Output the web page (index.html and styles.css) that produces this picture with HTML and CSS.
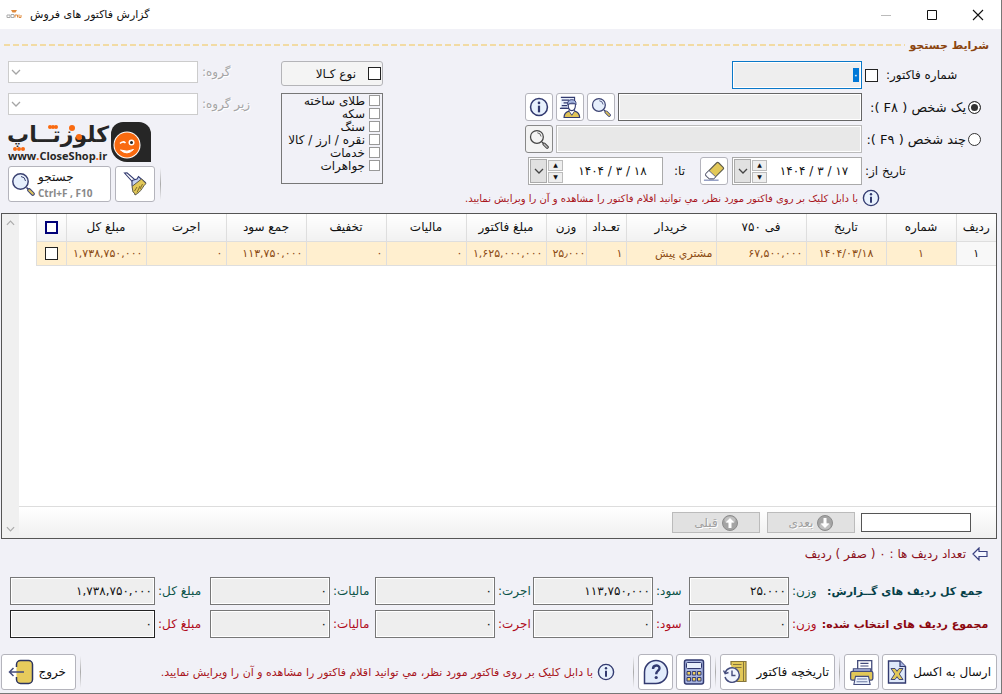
FILE: index.html
```html
<!DOCTYPE html>
<html lang="fa" dir="rtl">
<head>
    <meta charset="UTF-8">
    <meta name="viewport" content="width=device-width, initial-scale=1.0">
    <title>گزارش فاکتور های فروش</title>
    <link rel="stylesheet" href="styles.css">
</head>
<body>
    <svg class="defs" aria-hidden="true">
      <symbol id="i-search" viewBox="0 0 24 24">
        <path d="M15.5 15.5l2 2" stroke="#3b4272" stroke-width="1.6"/>
        <path d="M18.2 18.2l3.6 3.6" stroke="#3b4272" stroke-width="4" stroke-linecap="round"/>
        <path d="M18.2 18.2l3.6 3.6" stroke="#dcc25c" stroke-width="2" stroke-linecap="round"/>
        <circle cx="9.5" cy="9.5" r="7.7" fill="#e6effc" stroke="#3b4272" stroke-width="1.5"/>
        <path d="M10 4.5a5 5 0 0 1 4.5 4.5" fill="none" stroke="#3b4272"/>
      </symbol>
      <symbol id="i-search-grey" viewBox="0 0 24 24">
        <path d="M15.5 15.5l2 2" stroke="#444" stroke-width="1.6"/>
        <path d="M18.2 18.2l3.6 3.6" stroke="#444" stroke-width="4" stroke-linecap="round"/>
        <path d="M18.2 18.2l3.6 3.6" stroke="#bbb" stroke-width="1.6" stroke-linecap="round"/>
        <circle cx="9.5" cy="9.5" r="7.7" fill="#f3f3f3" stroke="#444" stroke-width="1.5"/>
        <path d="M10 4.5a5 5 0 0 1 4.5 4.5" fill="none" stroke="#444"/>
      </symbol>
      <symbol id="i-info" viewBox="0 0 18 18">
        <circle cx="9" cy="9" r="7.6" fill="#e8f1fd" stroke="#323a70" stroke-width="1.4"/>
        <circle cx="9" cy="5.3" r="1.2" fill="#323a70"/>
        <path d="M9 7.8v6" stroke="#323a70" stroke-width="2"/>
      </symbol>
      <symbol id="i-person" viewBox="0 0 24 24">
        <path d="M2 1.5h15v12H2" fill="#e8effb" stroke="#323a70" stroke-width="1.2"/>
        <path d="M3 4.5h8M5 7.5h5M3 10.5h6M1 13.5h8" stroke="#323a70" stroke-width="1.2"/>
        <path d="M5.5 23.5c0-4.5 2-6 5.5-7h6c3.5 1 5.5 2.5 5.5 7z" fill="#e0c458" stroke="#323a70" stroke-width="1.3"/>
        <path d="M11 16.5l3 4.5 3-4.5v-2h-6z" fill="#fff" stroke="#323a70"/>
        <path d="M10 8.5c0 5 1.5 7.5 4 7.5s4-2.5 4-7.5z" fill="#fff" stroke="#323a70" stroke-width="1.2"/>
        <path d="M9.5 9.5c-.5-4 1.5-5.5 4.5-5.5s5 1.5 4.5 5.5c-1.500-2-5-2.500-9 0z" fill="#a8b8e2" stroke="#323a70"/>
      </symbol>
      <symbol id="i-eraser" viewBox="0 0 24 24">
        <path d="M1 22h16" stroke="#6e7cb0" stroke-width="1.2"/>
        <path d="M3.5 14.5L15 3q1-1 2 0l5 5q1 1 0 2L11.5 20.5H7l-3.500-3q-1.500-1.500 0-3z" fill="#e2c858" stroke="#5c5a4c" stroke-width="1.2"/>
        <path d="M3.5 14.5l3-3 7.5 7-2.500 2H7l-3.500-3q-1.500-1.500 0-3z" fill="#fff" stroke="#555b80"/>
      </symbol>
      <symbol id="i-broom" viewBox="0 0 24 24">
        <path d="M1.5 1l2.500-.2 8 7-2.300 2.200z" fill="#fff" stroke="#323a70" stroke-width="1.1"/>
        <path d="M9 13.500v-4q0-1.500 1.500-1.500l3.500-1 1.500-2.500 7 6-2 2.500-10 4z" fill="#c3d0f0" stroke="#323a70" stroke-width="1.1"/>
        <path d="M9 14.500l9.500-7.500 4.500 4.500c-3 2-4 8-11 11.500q0-2.500-2-3z" fill="#e2c858" stroke="#5c5a4c"/>
        <path d="M11.500 19l2.500-4M14 20.500l3-6.500M17 17l2.500-5" stroke="#806c2c"/>
      </symbol>
      <symbol id="i-excel" viewBox="0 0 24 24">
        <path d="M3.500 1h11.500l5.500 5.500v16.500H3.500z" fill="#dfe9fa" stroke="#323a70" stroke-width="1.4"/>
        <path d="M15 1v5.500h5.500" fill="#a9b6e2" stroke="#323a70" stroke-width="1.2"/>
        <path d="M6 8.500h4l2 2.800 2-2.800h4l-3.700 5.500 3.700 5.500h-4l-2-2.800-2 2.800H6l3.700-5.500z" fill="#e2c858" stroke="#323a70" stroke-width=".9"/>
      </symbol>
      <symbol id="i-print" viewBox="0 0 24 24">
        <path d="M8 11V1.500h13V11" fill="#fff" stroke="#444c7c" stroke-width="1.2"/>
        <path d="M10.500 4h7.500M10.500 6.500h7.500" stroke="#444c7c"/>
        <path d="M4 9h16v3.500H4z" fill="#aeb9e0" stroke="#444c7c"/>
        <rect x="1.500" y="11.500" width="20.500" height="8" rx="1.500" fill="#e2c858" stroke="#444c7c" stroke-width="1.2"/>
        <path d="M6 16h12l1.500 7.500h-15z" fill="#e8effb" stroke="#444c7c"/>
        <path d="M7.500 18.500h9M7 21h10" stroke="#6c7ba4"/>
      </symbol>
      <symbol id="i-history" viewBox="0 0 24 24">
        <path d="M8 5V1.500h15V21.500H11" fill="#e2c858" stroke="#85753c" stroke-width="1.2"/>
        <path d="M10 4.500h8.500M12 7.500h6.500M20.500 2v19" stroke="#85753c"/>
        <circle cx="9" cy="15" r="7.8" fill="#f0f4fd"/>
        <path d="M2.200 12.500a7.300 7.300 0 1 1-.2 4.500M.5 10.500l1.700 3.200 3.300-1.200" fill="none" stroke="#444c7c" stroke-width="1.4"/>
        <path d="M9 10.500V15.500h3.500" fill="none" stroke="#444c7c" stroke-width="1.4"/>
      </symbol>
      <symbol id="i-calc" viewBox="0 0 22 26">
        <rect x="1.500" y="1" width="19" height="24" rx="2" fill="#a9b6e0" stroke="#323a70" stroke-width="1.5"/>
        <rect x="3.500" y="3.500" width="15" height="6" rx="1" fill="#e8effb" stroke="#323a70"/>
        <path d="M4 12.500h3.500v3.500H4zM9.300 12.500h3.500v3.500H9.300zM4 18.500h3.500v3.500H4zM9.300 18.500h3.500v3.500H9.300zM14.500 12.500h3.500v3.500h-3.500zM14.500 18.500h3.500v3.500h-3.500z" fill="#f0d060" stroke="#323a70"/>
      </symbol>
      <symbol id="i-help" viewBox="0 0 26 26">
        <path d="M1.500 24.500V13a11.500 11.500 0 1 1 11.500 11.500z" fill="#e2ecfc" stroke="#323a70" stroke-width="1.5"/>
        <path d="M10 10c0-4.500 6.500-4.500 6.500-.8 0 2.500-3.300 2.500-3.300 6" fill="none" stroke="#323a70" stroke-width="2.4"/>
        <circle cx="13.200" cy="18.500" r="1.6" fill="#323a70"/>
      </symbol>
      <symbol id="i-exit" viewBox="0 0 26 26">
        <rect x="8.500" y="1.500" width="16" height="23" rx="4" fill="#e6cb5c"/>
        <path d="M8.500 8V5.500a4 4 0 0 1 4-4h8a4 4 0 0 1 4 4v15a4 4 0 0 1-4 4h-8a4 4 0 0 1-4-4V18" fill="none" stroke="#2c3460" stroke-width="1.5"/>
        <path d="M16 13H2M5.500 9L1.500 13l4 4" fill="none" stroke="#444c7c" stroke-width="1.5"/>
      </symbol>
      <symbol id="i-chevron" viewBox="0 0 10 6">
        <path d="M1 1l4 4 4-4" fill="none" stroke="currentColor" stroke-width="1.3"/>
      </symbol>
      <symbol id="i-arrow-ball" viewBox="0 0 16 16">
        <circle cx="8" cy="8" r="7.5" fill="#a4a4a4" stroke="#8c8c8c"/>
        <ellipse cx="8" cy="5" rx="5.5" ry="3.5" fill="#c0c0c0"/>
        <path d="M8 3l4.500 4.500h-3V13h-3V7.500h-3z" fill="#fff"/>
      </symbol>
    </svg>

    <header class="titlebar" dir="ltr">
      <svg class="app-icon" viewBox="0 0 16 12" aria-hidden="true">
        <path d="M5 1h6l-1.500 2.500h-3z" fill="#e08a3c"/>
        <path d="M1 6h3v2.500H1zM5 5.500h3v3H5z" fill="none" stroke="#aaa"/>
        <path d="M9 8.500V6h2.500v2.500M13 5.500v3h2V6" fill="none" stroke="#e08a3c"/>
      </svg>
      <h1 dir="rtl">گزارش فاکتور های فروش</h1>
      <div class="win-buttons">
        <button type="button" aria-label="Minimize" disabled><svg viewBox="0 0 12 12"><path d="M1 6.500h10" stroke="#bbb"/></svg></button>
        <button type="button" aria-label="Maximize"><svg viewBox="0 0 12 12"><path d="M1.500 1.500h9v9h-9z" fill="none" stroke="#111"/></svg></button>
        <button type="button" aria-label="Close"><svg viewBox="0 0 12 12"><path d="M1 1l10 10M11 1L1 11" stroke="#111" stroke-width="1.1"/></svg></button>
      </div>
    </header>

    <main>
      <div class="section-title">
        <h2>شرایط جستجو</h2>
        <svg class="dashes" height="2" aria-hidden="true"><line x1="0" y1="1" x2="100%" y2="1"/></svg>
      </div>

      <form class="search" onsubmit="return false">
        <div class="conditions">
          <div class="field">
            <div class="caption number-caption">
              <label for="number-on">شماره فاکتور:</label>
              <input type="checkbox" class="check" id="number-on">
            </div>
            <input type="text" class="box number" id="number" aria-label="شماره فاکتور" value="۰">
          </div>
          <div class="field">
            <label class="caption person"><input type="radio" name="person" checked><span>یک شخص ( F۸ ):</span></label>
            <input type="text" class="box" aria-label="یک شخص">
            <button type="button" class="tool" aria-label="جستجوی شخص"><svg><use href="#i-search"/></svg></button>
            <button type="button" class="tool" aria-label="مشخصات شخص"><svg class="big"><use href="#i-person"/></svg></button>
            <button type="button" class="tool" aria-label="اطلاعات"><svg><use href="#i-info"/></svg></button>
          </div>
          <div class="field">
            <label class="caption person"><input type="radio" name="person"><span>چند شخص ( F۹ ):</span></label>
            <input type="text" class="box dim" aria-label="چند شخص">
            <button type="button" class="tool pressed" aria-label="جستجوی چند شخص"><svg><use href="#i-search-grey"/></svg></button>
          </div>
          <div class="field dates">
            <label class="caption date-caption" for="date-from">تاریخ از:</label>
            <div class="date" dir="ltr">
              <button type="button" class="drop" aria-label="تقویم"><svg><use href="#i-chevron"/></svg></button>
              <div class="spin"><button type="button" aria-label="بیشتر">▲</button><button type="button" aria-label="کمتر">▼</button></div>
              <input type="text" id="date-from" value="۱۴۰۴ / ۳ / ۱۷">
            </div>
            <button type="button" class="tool" aria-label="پاک کردن تاریخ"><svg class="big"><use href="#i-eraser"/></svg></button>
            <label class="date-to" for="date-to">تا:</label>
            <div class="date wide" dir="ltr">
              <button type="button" class="drop" aria-label="تقویم"><svg><use href="#i-chevron"/></svg></button>
              <div class="spin"><button type="button" aria-label="بیشتر">▲</button><button type="button" aria-label="کمتر">▼</button></div>
              <input type="text" id="date-to" value="۱۴۰۴ / ۳ / ۱۸">
            </div>
          </div>
          <p class="hint search-hint"><svg><use href="#i-info"/></svg><span>با دابل کلیک بر روی فاکتور مورد نظر، مي توانید اقلام فاکتور را مشاهده و آن را ویرایش نمایید.</span></p>
        </div>

        <div class="kinds">
          <label class="kind-all"><input type="checkbox" class="check"><span>نوع کـالا</span></label>
          <div class="kind-list">
            <label><input type="checkbox"><span>طلای ساخته</span></label>
            <label><input type="checkbox"><span>سکه</span></label>
            <label><input type="checkbox"><span>سنگ</span></label>
            <label><input type="checkbox"><span>نقره / ارز / کالا</span></label>
            <label><input type="checkbox"><span>خدمات</span></label>
            <label><input type="checkbox"><span>جواهرات</span></label>
          </div>
        </div>

        <div class="groups">
          <div class="group">
            <label for="group">گروه:</label>
            <div class="select"><select id="group" disabled></select><svg><use href="#i-chevron"/></svg></div>
          </div>
          <div class="group">
            <label for="subgroup">زیر گروه:</label>
            <div class="select"><select id="subgroup" disabled></select><svg><use href="#i-chevron"/></svg></div>
          </div>
          <div class="logo">
            <svg class="face" viewBox="0 0 40 40" aria-hidden="true">
              <path d="M0 12A12 12 0 0 1 12 0H28A12 12 0 0 1 40 12V40H16A16 16 0 0 1 0 24z" fill="#262626"/>
              <circle cx="16" cy="23" r="13.5" fill="#fff"/>
              <circle cx="16" cy="23" r="12.5" fill="#f96a10"/>
              <path d="M9 21.500q3-3 5.500-.5" fill="none" stroke="#fff" stroke-width="1.5"/>
              <path d="M9.500 28q6.500 6 13-.5-6.500 3-13 .5z" fill="#fff" stroke="#fff"/>
              <circle cx="20.500" cy="20.500" r="3" fill="#fff"/>
              <circle cx="20.500" cy="20.500" r="1.500" fill="#222"/>
            </svg>
            <div class="brand">
              <strong>کلوزتــاپ</strong>
              <span dir="ltr">www<b>.</b>CloseShop<b>.</b>ir</span>
              <svg class="dots" viewBox="0 0 101 42" aria-hidden="true">
                <circle cx="64" cy="7" r="3"/>
                <circle cx="42" cy="6" r="2"/><circle cx="45" cy="6" r="2"/><circle cx="48" cy="6" r="2"/>
                <circle cx="71" cy="16" r="3"/>
                <circle cx="7" cy="28" r="2"/><circle cx="11" cy="28" r="2"/><circle cx="15" cy="28" r="2"/>
              </svg>
            </div>
          </div>
          <div class="actions">
            <i class="sep"></i>
            <button type="button" class="action broom" aria-label="پاک کردن"><svg><use href="#i-broom"/></svg></button>
            <button type="submit" class="action find">
              <span class="find-text">جستجو<small dir="ltr">Ctrl+F , F10</small></span>
              <svg><use href="#i-search"/></svg>
            </button>
          </div>
        </div>
      </form>

      <section class="report">
        <div class="report-body">
          <div class="sheet">
            <table>
              <colgroup>
                <col class="c40"><col class="c70"><col class="c80"><col class="c90"><col class="c90"><col class="c40"><col class="c40">
                <col class="c80"><col class="c80"><col class="c80"><col class="c80"><col class="c80"><col class="c80"><col class="c30">
              </colgroup>
              <thead>
                <tr>
                  <th>ردیف</th><th>شماره</th><th>تاریخ</th><th>فی ۷۵۰</th><th>خریدار</th><th>تعـداد</th><th>وزن</th>
                  <th>مبلغ فاکتور</th><th>مالیات</th><th>تخفیف</th><th>جمع سود</th><th>اجرت</th><th>مبلغ کل</th>
                  <th><input type="checkbox" class="check navy" aria-label="انتخاب همه"></th>
                </tr>
              </thead>
              <tbody>
                <tr>
                  <td class="row-no">۱</td><td class="mid">۱</td><td class="mid">۱۴۰۴/۰۳/۱۸</td><td class="num">۶۷,۵۰۰,۰۰۰</td><td>مشتري پیش</td><td class="num">۱</td><td class="num weight">۲۵٫۰۰۰</td>
                  <td class="num">۱,۶۲۵,۰۰۰,۰۰۰</td><td class="num">۰</td><td class="num">۰</td><td class="num">۱۱۳,۷۵۰,۰۰۰</td><td class="num">۰</td><td class="num">۱,۷۳۸,۷۵۰,۰۰۰</td>
                  <td class="mid"><input type="checkbox" class="check" aria-label="انتخاب ردیف ۱"></td>
                </tr>
              </tbody>
            </table>
            <div class="pager">
              <input type="text" aria-label="جستجو در ردیف ها">
              <button type="button" disabled><svg class="down"><use href="#i-arrow-ball"/></svg>بعدی</button>
              <button type="button" disabled><svg><use href="#i-arrow-ball"/></svg>قبلی</button>
            </div>
          </div>
          <div class="scrollbar"><svg class="up"><use href="#i-chevron"/></svg><svg><use href="#i-chevron"/></svg></div>
        </div>
      </section>

      <p class="count">
        <svg viewBox="0 0 16 14"><path d="M1 7l6-6v3.500h8v5H7V13z" fill="#f4f6ff" stroke="#3b4280" stroke-width="1.2"/></svg>
        <span>تعداد ردیف ها : ۰ ( صفر ) ردیف</span>
      </p>

      <div class="sums total">
        <h3>جمع کل ردیف های گــزارش:</h3>
        <label for="t1">وزن:</label><input id="t1" type="text" value="۲۵.۰۰۰" readonly>
        <label for="t2">سود:</label><input id="t2" type="text" value="۱۱۳,۷۵۰,۰۰۰" readonly>
        <label for="t3">اجرت:</label><input id="t3" type="text" value="۰" readonly>
        <label for="t4">مالیات:</label><input id="t4" type="text" value="۰" readonly>
        <label for="t5">مبلغ کل:</label><input id="t5" type="text" value="۱,۷۳۸,۷۵۰,۰۰۰" readonly>
      </div>
      <div class="sums selected">
        <h3>مجموع ردیف های انتخاب شده:</h3>
        <label for="s1">وزن:</label><input id="s1" type="text" value="۰" readonly>
        <label for="s2">سود:</label><input id="s2" type="text" value="۰" readonly>
        <label for="s3">اجرت:</label><input id="s3" type="text" value="۰" readonly>
        <label for="s4">مالیات:</label><input id="s4" type="text" value="۰" readonly>
        <label for="s5">مبلغ کل:</label><input id="s5" type="text" class="dark" value="۰" readonly>
      </div>
    </main>

    <footer>
      <button type="button" class="action excel">ارسال به اکسل<svg><use href="#i-excel"/></svg></button>
      <button type="button" class="action icon-only" aria-label="چاپ"><svg><use href="#i-print"/></svg></button>
      <i class="sep"></i>
      <button type="button" class="action history">تاریخچه فاکتور<svg><use href="#i-history"/></svg></button>
      <i class="sep"></i>
      <button type="button" class="action icon-only" aria-label="ماشین حساب"><svg><use href="#i-calc"/></svg></button>
      <button type="button" class="action icon-only" aria-label="راهنما"><svg><use href="#i-help"/></svg></button>
      <i class="sep"></i>
      <p class="hint footer-hint"><svg><use href="#i-info"/></svg><span>با دابل کلیک بر روی فاکتور مورد نظر، مي توانید اقلام فاکتور را مشاهده و آن را ویرایش نمایید.</span></p>
      <i class="sep"></i>
      <button type="button" class="action exit">خروج<svg><use href="#i-exit"/></svg></button>
    </footer>

    <script>
      let number = document.querySelector('#number');
      number.focus();
      number.select();
    </script>
</body>
</html>
```

FILE: styles.css
```css
*{
  box-sizing: border-box;
}

body{
  margin: 0;
  min-height: 100vh;
  display: flex;
  flex-direction: column;
  background-color: #f1f1f7;
  color: #111;
  font-family: "DejaVu Sans", sans-serif;
  font-size: 12px;
  border-right: 1px solid #777;
  border-bottom: 1px solid #777;
}

button, input, select{
  font: inherit;
  color: inherit;
  margin: 0;
  padding: 0;
}

h1, h2, h3, p{
  margin: 0;
}

svg{
  display: block;
  flex: none;
}

.defs{
  position: absolute;
  width: 0;
  height: 0;
}

main{
  flex: 1;
  display: flex;
  flex-direction: column;
}

/* title bar */
.titlebar{
  display: flex;
  align-items: center;
  height: 29px;
  padding-left: 6px;
  background-color: white;
}
.app-icon{
  width: 16px;
  height: 12px;
}
.titlebar h1{
  margin-left: 8px;
  font-size: 11px;
  font-weight: normal;
}
.win-buttons{
  display: flex;
  margin-left: auto;
}
.win-buttons button{
  display: grid;
  place-items: center;
  width: 46px;
  height: 26px;
  border: 0;
  background: none;
}
.win-buttons svg{
  width: 12px;
  height: 12px;
}

/* search conditions */
.section-title{
  display: flex;
  align-items: center;
  gap: 4px;
  height: 32px;
  padding: 0 12px 0 4px;
}
.section-title h2{
  font-size: 11px;
  color: #8b4510;
}
.dashes{
  flex: 1;
  min-width: 0;
}
.dashes line{
  stroke: #f2dba4;
  stroke-width: 2;
  stroke-dasharray: 6 3;
}
.search{
  display: flex;
  height: 152px;
  padding: 0 20px 0 8px;
}
.conditions{
  flex: 1;
  min-width: 0;
  display: flex;
  flex-direction: column;
  gap: 4px;
}
.field{
  display: flex;
  align-items: center;
  gap: 3px;
  height: 28px;
}
.caption{
  display: flex;
  align-items: center;
  flex: none;
  gap: 2px;
  width: 116px;
  white-space: nowrap;
}
.caption.person{
  font-size: 13px;
}
.number-caption{
  justify-content: flex-end;
  gap: 8px;
}
.box{
  flex: 1;
  min-width: 0;
  height: 28px;
  border: 1px solid #666;
  background-color: #eee;
  box-shadow: inset 0 0 0 1px white;
}
.box.dim{
  border-color: #bbb;
  background-color: #e8e8e8;
}
.box.number{
  flex: none;
  width: 130px;
  padding: 0 2px;
  border-color: #0a78c8;
  outline: 0;
}
.box::selection{
  background-color: #0078d7;
  color: white;
}
.check{
  appearance: none;
  flex: none;
  width: 13px;
  height: 13px;
  border: 1px solid #222;
  background-color: white;
}
.check.navy{
  border: 2px solid #000078;
}
[type="radio"]{
  appearance: none;
  flex: none;
  width: 13px;
  height: 13px;
  border: 1px solid #333;
  border-radius: 50%;
  background-color: white;
}
[type="radio"]:checked{
  background-color: #333;
  box-shadow: inset 0 0 0 2px white;
}
.tool{
  display: grid;
  place-items: center;
  flex: none;
  width: 28px;
  height: 28px;
  border: 1px solid #b4b4bc;
  border-radius: 3px;
  background-color: white;
}
.tool svg{
  width: 20px;
  height: 20px;
}
.tool svg.big{
  width: 22px;
  height: 22px;
}
.tool.pressed{
  border-color: #888;
  background-color: #f3f3f3;
}
.dates{
  gap: 0;
  padding-left: 3px;
}
.date-caption{
  justify-content: flex-end;
  margin-left: 3px;
}
.date{
  display: flex;
  align-items: center;
  flex: none;
  width: 130px;
  height: 28px;
  padding-left: 1px;
  border: 1px solid #aaa;
  background-color: white;
}
.date.wide{
  width: 135px;
}
.date input{
  flex: 1;
  min-width: 0;
  border: 0;
  background: none;
  text-align: center;
}
.drop{
  display: grid;
  place-items: center;
  width: 17px;
  height: 24px;
  border: 1px solid #aaa;
  background-color: #e1e1e1;
  color: #444;
}
.drop svg{
  width: 10px;
  height: 6px;
}
.spin{
  display: flex;
  flex-direction: column;
  gap: 1px;
  margin-left: 1px;
}
.spin button{
  width: 15px;
  height: 11px;
  border: 1px solid #bbb;
  background-color: #eee;
  font-size: 6px;
  line-height: 8px;
}
.dates .tool{
  margin: 0 4px;
}
.date-to{
  flex: 1;
  text-align: center;
  white-space: nowrap;
}
.hint{
  display: flex;
  align-items: center;
  gap: 4px;
  font-size: 10px;
  color: #a81420;
  white-space: nowrap;
}
.hint svg{
  width: 18px;
  height: 18px;
}
.search-hint{
  height: 18px;
  padding-right: 101px;
}

.kinds{
  width: 102px;
  margin: 0 142px 0 16px;
}
.kind-all{
  display: flex;
  align-items: center;
  gap: 12px;
  height: 25px;
  padding: 0 1px;
  border: 1px solid #b4b4b8;
  border-radius: 3px;
  background-color: #f4f4f4;
}
.kind-list{
  height: 91px;
  margin-top: 7px;
  padding: 0 2px;
  border: 1px solid #777;
}
.kind-list label{
  display: flex;
  align-items: center;
  gap: 4px;
  height: 13px;
  white-space: nowrap;
}
.kind-list input{
  appearance: none;
  flex: none;
  width: 11px;
  height: 11px;
  border: 1px solid #999;
  background-color: white;
}

.groups{
  width: 257px;
}
.group{
  display: flex;
  justify-content: flex-end;
  gap: 4px;
  height: 22px;
  margin-bottom: 10px;
  line-height: 22px;
  color: #a5a5a5;
  text-shadow: 1px 1px white;
}
.select{
  position: relative;
  width: 190px;
}
.select select{
  appearance: none;
  display: block;
  width: 100%;
  height: 22px;
  border: 1px solid #ccc;
  background-color: white;
  opacity: 1;
}
.select svg{
  position: absolute;
  left: 3px;
  top: 8px;
  width: 10px;
  height: 6px;
}
.logo{
  display: flex;
  justify-content: flex-end;
  gap: 2px;
  height: 42px;
  margin-top: -4px;
  color: #262626;
}
.face{
  width: 40px;
  height: 40px;
  margin-top: 1px;
}
.brand{
  position: relative;
  display: flex;
  flex-direction: column;
  width: 101px;
}
.brand strong{
  font-size: 22px;
  line-height: 28px;
  white-space: nowrap;
}
.brand span{
  font-size: 11px;
  line-height: 14px;
  font-weight: bold;
  font-family: "Open Sans", sans-serif;
}
.brand b{
  color: #f96a10;
}
.dots{
  position: absolute;
  inset: 0;
  fill: #f96a10;
}
.actions{
  display: flex;
  justify-content: flex-end;
  gap: 4px;
  margin-top: 3px;
}
.action{
  display: flex;
  align-items: center;
  flex: none;
  height: 36px;
  border: 1px solid #b4b4bc;
  border-radius: 3px;
  background-color: white;
  white-space: nowrap;
}
.action svg{
  width: 24px;
  height: 24px;
}
.broom{
  width: 40px;
  justify-content: center;
}
.find{
  width: 103px;
  justify-content: flex-end;
  gap: 3px;
  padding-left: 2px;
}
.find-text{
  display: flex;
  flex-direction: column;
  width: 56px;
  text-align: left;
  line-height: 18px;
}
.find-text small{
  font-family: "Open Sans", sans-serif;
  font-size: 10px;
  font-weight: bold;
  line-height: 14px;
  color: #888;
}
.sep{
  width: 1px;
  height: 32px;
  margin: auto 1px;
  background-image: linear-gradient(transparent, #aaa, transparent);
}

/* report grid */
.report{
  flex: 1;
  display: flex;
  margin: 0 4px 0 1px;
  border: 1px solid #555;
  background-color: white;
}
.report-body{
  flex: 1;
  display: flex;
}
.sheet{
  flex: 1;
  display: flex;
  flex-direction: column;
}
table{
  width: calc(100% - 17px);
  table-layout: fixed;
  border-collapse: collapse;
}
.c30{ width: 30px; }
.c40{ width: 40px; }
.c70{ width: 70px; }
.c80{ width: 80px; }
.c90{ width: 90px; }

th, td{
  padding: 0 3px;
  border: 1px solid #dedede;
  border-top: 0;
  white-space: nowrap;
}
th:first-child, td:first-child{
  border-right: 0;
}
th{
  height: 27px;
  padding: 0;
  font-weight: normal;
  background-image: linear-gradient(white, #f1f1f1);
}
td{
  height: 24px;
  font-size: 11px;
  color: #8b4a12;
  background-color: #ffefcf;
}
th .check, td .check{
  display: block;
  margin: 0 auto;
}
td.row-no{
  text-align: center;
  color: #111;
  background-color: #f8f8f8;
}
.mid{
  text-align: center;
}
.num{
  direction: ltr;
  text-align: right;
}
.weight{
  padding: 0;
}
.pager{
  display: flex;
  align-items: center;
  gap: 6px;
  height: 32px;
  margin-top: auto;
  padding-right: 25px;
  border-top: 1px solid #ddd;
  background-image: linear-gradient(white, #f0f0f0);
}
.pager input{
  width: 110px;
  height: 19px;
  border: 1px solid #555;
  background-color: white;
}
.pager button{
  display: flex;
  align-items: center;
  justify-content: center;
  gap: 4px;
  width: 88px;
  height: 21px;
  border: 1px solid #bbb;
  background-color: #e1e1e1;
  color: #a0a0a0;
  text-shadow: 1px 1px white;
}
.pager button + button{
  margin-right: 1px;
}
.pager svg{
  width: 16px;
  height: 16px;
}
.pager .down{
  transform: rotate(180deg);
}
.scrollbar{
  display: flex;
  flex-direction: column;
  justify-content: space-between;
  width: 17px;
  padding: 6px 4px;
  background-color: #f0f0f0;
  color: #aaa;
}
.scrollbar svg{
  width: 9px;
  height: 6px;
}
.scrollbar .up{
  transform: rotate(180deg);
}

/* sums */
.count{
  display: flex;
  align-items: center;
  gap: 6px;
  height: 30px;
  padding-right: 13px;
  color: #8c1020;
}
.count svg{
  width: 16px;
  height: 14px;
}
.sums{
  display: grid;
  grid-template-columns: 168px 32px 100fr 36px 120fr 38px 120fr 45px 120fr 55px 145fr;
  align-items: center;
  margin-top: 5px;
  padding: 0 12px 0 10px;
}
.total{
  margin-top: 8px;
  color: #0c5448;
}
.selected{
  color: #b00c1c;
}
.sums h3{
  font-size: 11px;
  text-align: center;
  white-space: nowrap;
}
.total h3{
  color: #064048;
}
.selected h3{
  color: #8c0810;
}
.sums label{
  padding-left: 3px;
  text-align: left;
  white-space: nowrap;
}
.sums input{
  width: 100%;
  height: 28px;
  padding: 0 2px;
  border: 1px solid #777;
  background-color: #eee;
  box-shadow: inset 0 0 0 1px white;
  color: #111;
  direction: ltr;
  text-align: right;
}
.sums .dark{
  border-color: #222;
}

/* footer */
footer{
  display: flex;
  align-items: center;
  gap: 3px;
  margin: 16px 0 3px;
  padding: 0 4px 0 1px;
}
.excel, .history{
  width: 115px;
  justify-content: space-between;
  padding: 0 5px 0 2px;
}
.icon-only{
  width: 35px;
  justify-content: center;
}
.exit{
  width: 75px;
  justify-content: space-between;
  padding: 0 9px 0 6px;
}
.exit svg, .icon-only svg{
  width: 26px;
  height: 26px;
}
.footer-hint{
  flex: 1;
  padding-right: 14px;
  font-size: 11px;
}
```
